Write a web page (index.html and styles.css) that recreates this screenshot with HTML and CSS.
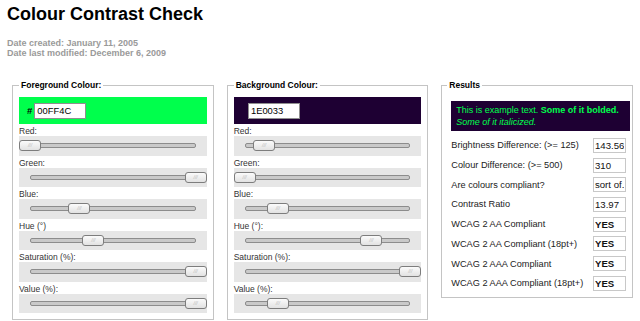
FILE: index.html
```html
<!DOCTYPE html>
<html lang="en">
    <head>
        <meta charset="UTF-8" />
        <title>Colour Contrast Check</title>
        <link rel="stylesheet" href="styles.css">
    </head>
    <body>
        <h1 class="title">Colour Contrast Check</h1>
        <p class="dates">Date created: January 11, 2005<br />Date last modified: December 6, 2009</p>

        <div class="panels">
            <fieldset class="panel">
                <legend>Foreground Colour:</legend>
                <div class="swatch swatch-fg">
                    <label for="fg">#</label>
                    <input type="text" id="fg" class="hex" value="00FF4C" />
                </div>
                <div class="slider-label">Red:</div>
                <div class="band"><div class="track"></div><span class="thumb" style="--v: 0"></span></div>
                <div class="slider-label">Green:</div>
                <div class="band"><div class="track"></div><span class="thumb" style="--v: 1"></span></div>
                <div class="slider-label">Blue:</div>
                <div class="band"><div class="track"></div><span class="thumb" style="--v: 0.298"></span></div>
                <div class="slider-label">Hue (°)</div>
                <div class="band"><div class="track"></div><span class="thumb" style="--v: 0.383"></span></div>
                <div class="slider-label">Saturation (%):</div>
                <div class="band"><div class="track"></div><span class="thumb" style="--v: 1"></span></div>
                <div class="slider-label">Value (%):</div>
                <div class="band"><div class="track"></div><span class="thumb" style="--v: 1"></span></div>
            </fieldset>

            <fieldset class="panel">
                <legend>Background Colour:</legend>
                <div class="swatch swatch-bg">
                    <label for="bg">#</label>
                    <input type="text" id="bg" class="hex" value="1E0033" />
                </div>
                <div class="slider-label">Red:</div>
                <div class="band"><div class="track"></div><span class="thumb" style="--v: 0.118"></span></div>
                <div class="slider-label">Green:</div>
                <div class="band"><div class="track"></div><span class="thumb" style="--v: 0"></span></div>
                <div class="slider-label">Blue:</div>
                <div class="band"><div class="track"></div><span class="thumb" style="--v: 0.2"></span></div>
                <div class="slider-label">Hue (°):</div>
                <div class="band"><div class="track"></div><span class="thumb" style="--v: 0.765"></span></div>
                <div class="slider-label">Saturation (%):</div>
                <div class="band"><div class="track"></div><span class="thumb" style="--v: 1"></span></div>
                <div class="slider-label">Value (%):</div>
                <div class="band"><div class="track"></div><span class="thumb" style="--v: 0.2"></span></div>
            </fieldset>

            <fieldset class="panel results">
                <legend>Results</legend>
                <div class="sample">
                    This is example text. <strong>Some of it bolded.</strong><br />
                    <em>Some of it italicized.</em>
                </div>
                <div class="result-list">
                    <div class="result"><span>Brightness Difference: (&gt;= 125)</span><input type="text" class="result-value" value="143.56" /></div>
                    <div class="result"><span>Colour Difference: (&gt;= 500)</span><input type="text" class="result-value" value="310" /></div>
                    <div class="result"><span>Are colours compliant?</span><input type="text" class="result-value" value="sort of." /></div>
                    <div class="result"><span>Contrast Ratio</span><input type="text" class="result-value" value="13.97" /></div>
                    <div class="result"><span>WCAG 2 AA Compliant</span><input type="text" class="result-value c-bold" value="YES" /></div>
                    <div class="result"><span>WCAG 2 AA Compliant (18pt+)</span><input type="text" class="result-value c-bold" value="YES" /></div>
                    <div class="result"><span>WCAG 2 AAA Compliant</span><input type="text" class="result-value c-bold" value="YES" /></div>
                    <div class="result"><span>WCAG 2 AAA Compliant (18pt+)</span><input type="text" class="result-value c-bold" value="YES" /></div>
                </div>
            </fieldset>
        </div>
    </body>
</html>
```

FILE: styles.css
```css
* {
    box-sizing: border-box;
}
body {
    margin: 0;
    padding: 3px 7px 0;
    font-family: "Liberation Sans", Arial, sans-serif;
    color: #000;
    background: #fff;
}
.c-bold {
    font-weight: bold;
}

.title {
    margin: 0;
    font-size: 18px;
    line-height: 22px;
    font-weight: bold;
}

.dates {
    margin: 13px 0 0;
    color: #9a9a9a;
    font-size: 9px;
    line-height: 10px;
    font-weight: bold;
}

.panels {
    display: flex;
    align-items: flex-start;
    gap: 13px;
    margin: 22px 0 0 5px;
}

.panel {
    width: 203px;
    margin: 0;
    padding: 6px 6px 5.5px;
    border: 1px solid #c4c4c4;
    min-width: 0;
}
.panel legend {
    padding: 0 2px;
    font-size: 8.5px;
    line-height: 11px;
    font-weight: bold;
}

.swatch {
    display: flex;
    align-items: center;
    height: 27px;
    padding: 0 8px;
    font-size: 9.5px;
    font-weight: bold;
}
.swatch label {
    margin-right: 2px;
}
.swatch-fg {
    color: #000;
    background-color: #00ff4c;
}
.swatch-bg {
    color: #1e0033;
    background-color: #1e0033;
    padding-left: 7px;
}
.hex {
    width: 52px;
    height: 16px;
    padding: 0 2px;
    border: 1px solid #8f8f8f;
    font-family: "Liberation Sans", Arial, sans-serif;
    font-size: 9.4px;
    color: #000;
    background: #fff;
    outline: none;
}

.slider-label {
    height: 12px;
    color: #333;
    font-size: 8.5px;
    line-height: 14px;
}

.band {
    position: relative;
    display: flex;
    align-items: center;
    height: 19.5px;
    padding: 0 11px;
    background-color: #e6e6e6;
}
.track {
    flex: 1;
    height: 5px;
    border: 1px solid #8c8c8c;
    border-radius: 2px;
    background-color: #c9c9c9;
}
.thumb {
    position: absolute;
    top: 50%;
    left: calc((100% - 22px) * var(--v));
    width: 22px;
    height: 11px;
    margin-top: -5.5px;
    border: 1px solid #7d7d7d;
    border-radius: 3px;
    background: linear-gradient(#fbfbfb, #e2e2e2);
    color: #b4b4b4;
    font-size: 5px;
    line-height: 9px;
    text-align: center;
}
.thumb::after {
    content: "///";
    font-style: italic;
}

.results {
    width: 193px;
    padding: 10px 2px 6.5px 9px;
}
.results legend {
    margin-left: -4px;
}

.sample {
    padding: 4px 5px 3px;
    color: #00ff4c;
    background-color: #1e0033;
    font-size: 9px;
    line-height: 11.7px;
}

.result-list {
    display: flex;
    flex-direction: column;
    gap: 5.7px;
    margin-top: 7px;
    padding-right: 4px;
}
.result {
    display: flex;
    align-items: center;
    justify-content: space-between;
    height: 14px;
    color: #222;
    font-size: 9.2px;
}
.result-value {
    width: 33px;
    height: 15px;
    padding: 0 1px;
    border: 1px solid #c8c8c8;
    font-family: "Liberation Sans", Arial, sans-serif;
    font-size: 9.6px;
    color: #111;
    background: #fff;
    outline: none;
}
```
